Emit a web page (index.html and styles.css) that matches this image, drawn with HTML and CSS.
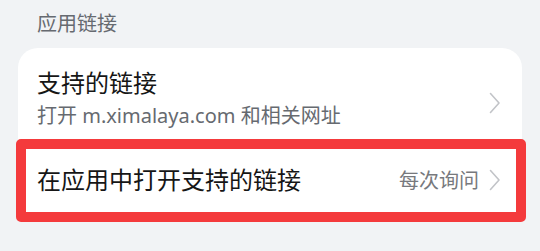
FILE: index.html
```html
<!DOCTYPE html>
<html lang="zh-CN">
<head>
    <meta charset="UTF-8">
    <meta name="viewport" content="width=device-width, initial-scale=1.0">
    <title>应用链接</title>
    <link rel="stylesheet" href="styles.css">
</head>
<body>
    <div class="section-title">应用链接</div>

    <div class="card">
        <!-- Supported links -->
        <div class="row row-double">
            <div class="row-text">
                <div class="row-title">支持的链接</div>
                <div class="row-sub">打开 m.ximalaya.com 和相关网址</div>
            </div>
            <svg class="chevron" viewBox="0 0 12 22" width="12" height="22">
                <path d="M1.5 1.5 L10 11 L1.5 20.5" />
            </svg>
        </div>

        <!-- Open supported links, highlighted -->
        <div class="row row-single highlight">
            <div class="row-title">在应用中打开支持的链接</div>
            <div class="row-value">每次询问</div>
            <svg class="chevron" viewBox="0 0 12 22" width="12" height="22">
                <path d="M1.5 1.5 L10 11 L1.5 20.5" />
            </svg>
        </div>
    </div>
</body>
</html>
```

FILE: styles.css
```css
body {
    margin: 0;
    background-color: #f1f3f5;
    font-family: "Noto Sans", "Noto Sans CJK SC", sans-serif;
    width: 540px;
    height: 251px;
    overflow: hidden;
}

.section-title {
    padding: 10px 0 0 37px;
    height: 48px;
    box-sizing: border-box;
    font-size: 20px;
    line-height: 28px;
    color: #666a70;
}

.card {
    margin: 0 18px;
    background-color: white;
    border-radius: 20px;
}

.row {
    display: flex;
    align-items: center;
    padding: 0 21px 0 19px;
}

.row-double {
    height: 91px;
    box-sizing: border-box;
    padding-top: 18px;
    padding-bottom: 9px;
}

.row-text {
    flex: 1;
}

.row-title {
    flex: 1;
    font-size: 24px;
    line-height: 32px;
    color: #161616;
}

.row-sub {
    margin-top: 3px;
    font-size: 20px;
    line-height: 28px;
    color: #666a70;
}

.row-single {
    height: 83px;
    padding-bottom: 2px;
    box-sizing: border-box;
}

.row-value {
    font-size: 20px;
    color: #77797d;
    margin-right: 10px;
}

.chevron {
    fill: none;
    stroke: #c2c4c8;
    stroke-width: 1.6;
    stroke-linecap: round;
    stroke-linejoin: round;
}

.row-double .chevron {
    margin-top: 9px;
}

/* Red annotation box drawn over the row */
.highlight {
    position: relative;
}

.highlight::after {
    content: "";
    position: absolute;
    top: 0;
    bottom: 0;
    left: -2px;
    right: -4px;
    border: 10px solid #f43a3c;
    border-radius: 5px;
}
```
